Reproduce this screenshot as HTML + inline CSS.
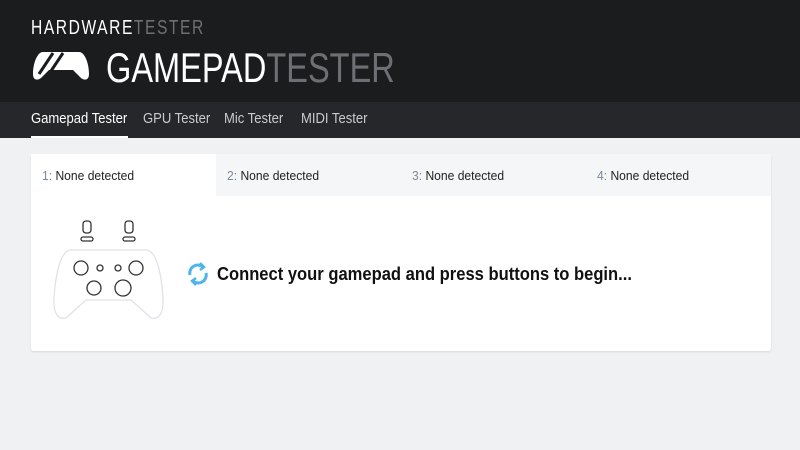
<!DOCTYPE html>
<html><head><style>
*{margin:0;padding:0;box-sizing:border-box}
body{width:800px;height:450px;overflow:hidden;background:#f0f1f3;font-family:"Liberation Sans",sans-serif}
.top{height:102px;background:#1b1c1e;position:relative}
.hw{position:absolute;left:31px;top:17px;font-size:20px;letter-spacing:2px;color:#fff;transform:scaleX(0.78);transform-origin:left}
.hw span,.gp span{color:#6c7075}
.gp{position:absolute;left:106px;top:44px;font-size:42px;color:#fff;transform:scaleX(0.775);transform-origin:left}
.nav{height:36px;background:#25272a;position:relative}
.nav a{position:absolute;top:9px;font-size:14.5px;color:#c8cacd;text-decoration:none;transform:scaleX(0.9);transform-origin:left;white-space:nowrap}
.card{position:absolute;left:31px;top:154px;width:740px;height:197px;background:#fff;border-radius:3px;box-shadow:0 1px 2px rgba(0,0,0,.1)}
.tabs{display:flex;height:42px}
.tab{flex:1;background:#f5f6f7;font-size:13px;color:#222;padding:14px 11px}
.tab span{display:inline-block;transform:scaleX(0.93);transform-origin:left}
.tab b{font-weight:normal;color:#7d8a99}
.tab.on{background:#fff}
.msg{position:absolute;left:156px;top:106px;display:flex;align-items:center;gap:8px}
.msg span{font-size:18px;font-weight:bold;color:#111;display:inline-block;transform:scaleX(0.92);transform-origin:left;white-space:nowrap}
</style></head><body>
<div class="top">
<div class="hw">HARDWARE<span>TESTER</span></div>
<svg style="position:absolute;left:31px;top:50px" width="60" height="32" viewBox="0 0 60 32"><path d="M12 2H48C54 2 58 14 58 24C58 30 54 31 50 28L42 20H18L10 28C6 31 2 30 2 24C2 14 6 2 12 2Z" fill="#fff"/><path d="M22 3L8 24M32 3L18 24" stroke="#1b1c1e" stroke-width="3"/></svg>
<div class="gp">GAMEPAD<span>TESTER</span></div>
</div>
<div class="nav">
<a style="left:31px;color:#fff">Gamepad Tester</a>
<div style="position:absolute;left:31px;top:34px;width:97px;height:2px;background:#fff"></div>
<a style="left:143px">GPU Tester</a>
<a style="left:224px">Mic Tester</a>
<a style="left:301px">MIDI Tester</a>
</div>
<div class="card">
<div class="tabs"><div class="tab on"><span><b>1:</b> None detected</span></div><div class="tab"><span><b>2:</b> None detected</span></div><div class="tab"><span><b>3:</b> None detected</span></div><div class="tab"><span><b>4:</b> None detected</span></div></div>
<svg style="position:absolute;left:20px;top:64px" width="115" height="110" viewBox="0 0 115 110" fill="none" stroke="#333" stroke-width="1.3">
<rect x="32" y="3" width="8" height="12" rx="3"/><rect x="30" y="19" width="12" height="4" rx="2"/>
<rect x="74" y="3" width="8" height="12" rx="3"/><rect x="72" y="19" width="12" height="4" rx="2"/>
<path d="M20 32H95C104 32 110 50 112 80C113 95 108 102 100 100L80 82H35L15 100C7 102 2 95 3 80C5 50 11 32 20 32Z" stroke="#dfe3e8"/>
<circle cx="30" cy="50" r="7"/><circle cx="49" cy="50" r="3"/><circle cx="67" cy="50" r="3"/><circle cx="85" cy="50" r="7"/>
<circle cx="43" cy="70" r="7"/><circle cx="72" cy="70" r="8"/>
</svg>
<div class="msg"><svg width="22" height="28" viewBox="0 0 22 28" fill="none" stroke="#4db4ec" stroke-width="3"><path d="M3 15A8 8 0 0 1 16 7"/><path d="M19 13A8 8 0 0 1 6 21"/><path d="M13 3l4 4-4 3M9 25l-4-4 4-3" stroke-width="2.5"/></svg><span>Connect your gamepad and press buttons to begin...</span></div>
</div>
</body></html>
